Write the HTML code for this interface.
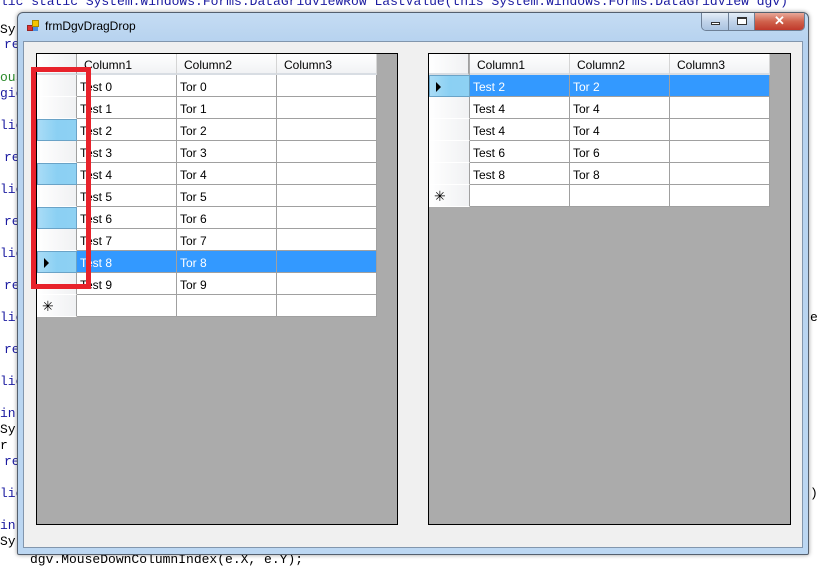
<!DOCTYPE html>
<html><head><style>
*{margin:0;padding:0;box-sizing:border-box}
body{width:818px;height:557px;overflow:hidden;background:#fff;position:relative;font-family:"Liberation Sans",sans-serif;font-size:12px}
.code{position:absolute;font-family:"Liberation Mono",monospace;font-size:13px;color:#1a1aa0;white-space:pre}
.win{position:absolute;left:17px;top:12px;width:792px;height:543px;background:linear-gradient(#c5dcf3,#b6d2ef 30px,#bcd7f2);border:1px solid #55606e;border-radius:6px 6px 2px 2px;box-shadow:0 0 4px rgba(0,0,0,.4)}
.client{position:absolute;left:5px;top:28px;width:780px;height:507px;background:#f0f0f0;border:1px solid #8296ad}
.title{position:absolute;left:27px;top:6px;font-size:12px;color:#000}
.grid{position:absolute;top:53px;height:472px;background:#ababab;border:1px solid #000}
.cell{position:absolute;height:22px;border-right:1px solid #a0a0a0;border-bottom:1px solid #a0a0a0;background:#fff;padding:5px 0 0 3px;color:#000;white-space:nowrap}
.hdr{position:absolute;height:21px;background:linear-gradient(#fff,#f1f2f4);border-right:1px solid #d5d5d5;border-bottom:2px solid #d8dde3;padding:4px 0 0 7px}
.rh{position:absolute;width:40px;height:22px;background:linear-gradient(90deg,#fff,#f0f1f3);border-bottom:1px solid #fff;border-right:1px solid #a0a0a0}
.rhs{background:linear-gradient(90deg,#a9dcf6,#8bd0f3 50%,#8ed1f3);border:1px solid #6aa3c7}
.sel{background:#3399ff;color:#fff}
.arrow{position:absolute;left:6px;top:6px;width:0;height:0;border-top:5px solid transparent;border-bottom:5px solid transparent;border-left:5px solid #000}
.star{position:absolute;left:5px;top:3px;font-size:14px}
</style></head><body>
<div class="code" style="left:0;top:-6px">lic static System.Windows.Forms.DataGridViewRow LastValue(this System.Windows.Forms.DataGridView dgv)</div>
<div class="code" style="left:0;top:22px;color:#000">Sy</div>
<div class="code" style="left:4px;top:37px">re</div>
<div class="code" style="left:0;top:70px;color:#2a8a2a">ous</div>
<div class="code" style="left:0;top:86px">gio</div>
<div class="code" style="left:0;top:118px">lic</div>
<div class="code" style="left:4px;top:150px">re</div>
<div class="code" style="left:0;top:182px">lic</div>
<div class="code" style="left:4px;top:214px">re</div>
<div class="code" style="left:0;top:246px">lic</div>
<div class="code" style="left:4px;top:278px">re</div>
<div class="code" style="left:0;top:310px">lic</div>
<div class="code" style="left:4px;top:342px">re</div>
<div class="code" style="left:0;top:374px">lic</div>
<div class="code" style="left:0;top:406px">in</div>
<div class="code" style="left:0;top:422px;color:#000">Sy</div>
<div class="code" style="left:0;top:438px;color:#000">r</div>
<div class="code" style="left:4px;top:454px">re</div>
<div class="code" style="left:0;top:486px">lic</div>
<div class="code" style="left:0;top:518px">in</div>
<div class="code" style="left:0;top:534px;color:#000">Sy</div>
<div class="code" style="left:30px;top:552px;color:#000">dgv.MouseDownColumnIndex(e.X, e.Y);</div>
<div class="code" style="left:810px;top:310px;color:#000">e</div>
<div class="code" style="left:810px;top:486px;color:#000">)</div>

<div class="win">
 <div style="position:absolute;left:9px;top:7px;width:12px;height:12px"><div style="position:absolute;left:0;top:5px;width:6px;height:6px;background:#d33;border:1px solid #922"></div><div style="position:absolute;left:5px;top:0;width:7px;height:7px;background:#f5c400;border:1px solid #a80"></div><div style="position:absolute;left:6px;top:7px;width:5px;height:4px;background:#4a8ee0"></div></div>
 <div class="title">frmDgvDragDrop</div>
 <div style="position:absolute;left:683px;top:0;width:104px;height:18px;border:1px solid #6d7f96;border-top:none;border-radius:0 0 5px 5px;overflow:hidden;display:flex">
  <div style="width:27px;height:17px;background:linear-gradient(#e4edf7,#c2d4ea 50%,#aac3e0);border-right:1px solid #6d7f96;position:relative"><div style="position:absolute;left:9px;top:9px;width:9px;height:3px;border:1px solid #333;background:#fff"></div></div>
  <div style="width:26px;height:17px;background:linear-gradient(#e4edf7,#c2d4ea 50%,#aac3e0);border-right:1px solid #6d7f96;position:relative"><div style="position:absolute;left:8px;top:4px;width:10px;height:8px;border:1px solid #333;border-top-width:2px;background:#fff"></div></div>
  <div style="flex:1;height:17px;background:linear-gradient(#e8a99a,#d0624c 50%,#c0392b);color:#fff;font-weight:bold;text-align:center;font-size:13px;line-height:16px">✕</div>
 </div>
 <div class="client"></div>
</div>

<div class="grid" style="left:36px;width:362px">
 <div class="rh" style="left:0;top:0;height:21px;border-bottom:2px solid #d8dde3"></div>
 <div class="hdr" style="left:40px;top:0;width:100px">Column1</div>
 <div class="hdr" style="left:140px;top:0;width:100px">Column2</div>
 <div class="hdr" style="left:240px;top:0;width:100px">Column3</div>
 <div id="g1"></div>
</div>
<div class="grid" style="left:428px;width:363px">
 <div class="rh" style="left:0;top:0;height:21px;border-bottom:2px solid #d8dde3"></div>
 <div class="hdr" style="left:41px;top:0;width:100px">Column1</div>
 <div class="hdr" style="left:141px;top:0;width:100px">Column2</div>
 <div class="hdr" style="left:241px;top:0;width:100px">Column3</div>
 <div id="g2"></div>
</div>
<div style="position:absolute;left:31px;top:67px;width:60px;height:222px;border:5px solid #e8222b"></div>
<script>
function build(id,rows,sel,bluerows,rhw){
 var h='';
 for(var i=0;i<=rows.length;i++){
  var t=21+i*22;
  var isNew=i==rows.length;
  var s=i==sel;
  var cls='rh'+((bluerows.indexOf(i)>=0)?' rhs':'');
  h+='<div class="'+cls+'" style="left:0;top:'+t+'px;width:'+rhw+'px">'+(s?'<div class="arrow"></div>':'')+(isNew?'<div class="star">✳</div>':'')+'</div>';
  var a=isNew?'':'Test '+rows[i],b=isNew?'':'Tor '+rows[i];
  var c=s?' sel':'';
  h+='<div class="cell'+c+'" style="left:'+rhw+'px;top:'+t+'px;width:100px">'+a+'</div>';
  h+='<div class="cell'+c+'" style="left:'+(rhw+100)+'px;top:'+t+'px;width:100px">'+b+'</div>';
  h+='<div class="cell'+c+'" style="left:'+(rhw+200)+'px;top:'+t+'px;width:100px"></div>';
 }
 document.getElementById(id).innerHTML=h;
}
build('g1',[0,1,2,3,4,5,6,7,8,9],8,[2,4,6,8],40);
build('g2',[2,4,4,6,8],0,[0],41);
</script>
</body></html>
